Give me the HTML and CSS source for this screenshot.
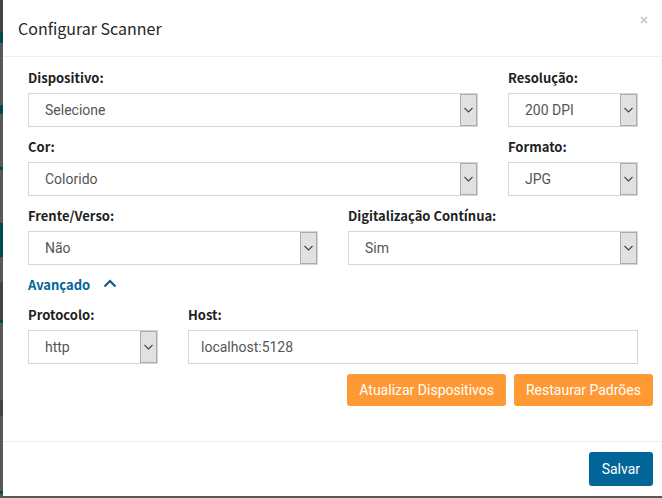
FILE: index.html
```html
<!DOCTYPE html>
<html lang="pt-BR">
<head>
<meta charset="utf-8">
<title>Configurar Scanner</title>
<link rel="stylesheet" href="styles.css">
</head>
<body>
<svg class="sprite" aria-hidden="true">
  <symbol id="chevron" viewBox="0 0 10 6"><path d="M.5 1L4.500 5l4-4" fill="none" stroke="#444" stroke-width="1.1"/></symbol>
</svg>
<form class="modal" role="dialog" aria-labelledby="title">
  <header class="modal-header">
    <h1 class="modal-title" id="title">Configurar Scanner</h1>
    <button class="close" type="button" aria-label="Fechar"><svg width="8" height="8" viewBox="0 0 8 8"><path d="M1 1l6 6M7 1l-6 6" stroke="#c6c6c6" stroke-width="1.7"/></svg></button>
  </header>
  <main class="modal-body">
    <div class="grid">
      <div class="field span-9">
        <label for="device">Dispositivo:</label>
        <div class="select"><select id="device"><option>Selecione</option></select><span class="arrow"><svg width="10" height="6"><use href="#chevron"/></svg></span></div>
      </div>
      <div class="field span-3">
        <label for="resolution">Resolução:</label>
        <div class="select"><select id="resolution"><option>200 DPI</option></select><span class="arrow"><svg width="10" height="6"><use href="#chevron"/></svg></span></div>
      </div>
      <div class="field span-9">
        <label for="color">Cor:</label>
        <div class="select"><select id="color"><option>Colorido</option></select><span class="arrow"><svg width="10" height="6"><use href="#chevron"/></svg></span></div>
      </div>
      <div class="field span-3">
        <label for="format">Formato:</label>
        <div class="select"><select id="format"><option>JPG</option></select><span class="arrow"><svg width="10" height="6"><use href="#chevron"/></svg></span></div>
      </div>
      <div class="field span-6">
        <label for="duplex">Frente/Verso:</label>
        <div class="select"><select id="duplex"><option>Não</option></select><span class="arrow"><svg width="10" height="6"><use href="#chevron"/></svg></span></div>
      </div>
      <div class="field span-6">
        <label for="continuous">Digitalização Contínua:</label>
        <div class="select"><select id="continuous"><option>Sim</option></select><span class="arrow"><svg width="10" height="6"><use href="#chevron"/></svg></span></div>
      </div>
      <a class="advanced" href="#advanced">Avançado
        <svg width="14" height="12" viewBox="0 0 14 12"><path d="M1.500 7.500L7 2l5.500 5.500" fill="none" stroke="#0e5486" stroke-width="2"/></svg>
      </a>
      <div class="field span-3" id="advanced">
        <label for="protocol">Protocolo:</label>
        <div class="select"><select id="protocol"><option>http</option></select><span class="arrow"><svg width="10" height="6"><use href="#chevron"/></svg></span></div>
      </div>
      <div class="field span-9">
        <label for="host">Host:</label>
        <input id="host" type="text" value="localhost:5128">
      </div>
    </div>
    <div class="actions">
      <button class="btn btn-warning" type="button">Atualizar Dispositivos</button>
      <button class="btn btn-warning" type="button">Restaurar Padrões</button>
    </div>
  </main>
  <footer class="modal-footer">
    <button class="btn btn-primary" type="submit">Salvar</button>
  </footer>
</form>
</body>
</html>
```
FILE: styles.css
```css
* { box-sizing: border-box; }

html {
  min-height: 100%;
  background:
    linear-gradient(#004c4c, #004c4c) 0 32px / 3px 11px no-repeat,
    linear-gradient(#004c4c, #004c4c) 0 105px / 3px 9px no-repeat,
    linear-gradient(#004c4c, #004c4c) 0 167px / 3px 3px no-repeat,
    linear-gradient(#004c4c, #004c4c) 0 223px / 3px 34px no-repeat,
    linear-gradient(#004c4c, #004c4c) 0 320px / 3px 3px no-repeat,
    linear-gradient(#004c4c, #004c4c) 0 491px / 3px 3px no-repeat,
    linear-gradient(#444, #444) 0 0 / 3px 32px no-repeat,
    linear-gradient(#444, #444) 0 282px / 3px 38px no-repeat,
    linear-gradient(#444, #444) 0 400px / 3px 16px no-repeat,
    #585858;
}

body {
  margin: 0;
  padding: 0 0 2px 3px;
  font: 14px/20px Roboto, sans-serif;
}

.sprite { position: absolute; width: 0; height: 0; }

.modal { display: block; background: #fff; }

.modal-header {
  display: flex;
  justify-content: space-between;
  align-items: flex-start;
  padding: 16px 14px 16px 15px;
  border-bottom: 1px solid #efefef;
}

.modal-title {
  margin: 0;
  font: 400 16px/24px "Noto Sans CJK JP", sans-serif;
  color: #262626;
}

.close {
  display: flex;
  padding: 0;
  border: 0;
  background: none;
}

.modal-body { padding: 11px 9px 35px 10px; }

.grid {
  display: grid;
  grid-template-columns: repeat(12, minmax(0, 1fr));
  row-gap: 10px;
}

.field { padding: 0 15px; }
.span-3 { grid-column: span 3; }
.span-6 { grid-column: span 6; }
.span-9 { grid-column: span 9; }

label, .advanced {
  font: 700 13px/20px "Noto Sans CJK JP", sans-serif;
  color: #1f1f1f;
}

label { display: block; margin-bottom: 5px; }

.select { position: relative; }

select, input {
  display: block;
  width: 100%;
  height: 34px;
  margin: 0;
  border: 1px solid #d5d5d5;
  border-radius: 0;
  background: #fff;
  color: #555;
  font: 14px/20px Roboto, sans-serif;
  appearance: none;
}

select { padding: 0 24px 0 16px; }
input { padding: 0 12px; }

.arrow {
  position: absolute;
  top: 1px;
  right: 1px;
  bottom: 1px;
  width: 17px;
  display: flex;
  align-items: center;
  justify-content: center;
  border: 1px solid #adadad;
  background: #e1e1e1;
  pointer-events: none;
}

.advanced {
  grid-column: 1 / -1;
  justify-self: start;
  display: flex;
  align-items: center;
  gap: 13px;
  margin-left: 15px;
  color: #069;
  text-decoration: none;
}

.actions {
  display: flex;
  justify-content: flex-end;
  gap: 8px;
  margin-top: 10px;
}

.btn {
  padding: 6px 12px;
  border: 0;
  border-radius: 3px;
  color: #fff;
  font: 14px/20px Roboto, sans-serif;
}

.btn-warning { background: #f93; }
.btn-primary { padding: 7px 13px; background: #069; }

.modal-footer {
  display: flex;
  justify-content: flex-end;
  padding: 10px 9px;
  border-top: 1px solid #efefef;
}
```
